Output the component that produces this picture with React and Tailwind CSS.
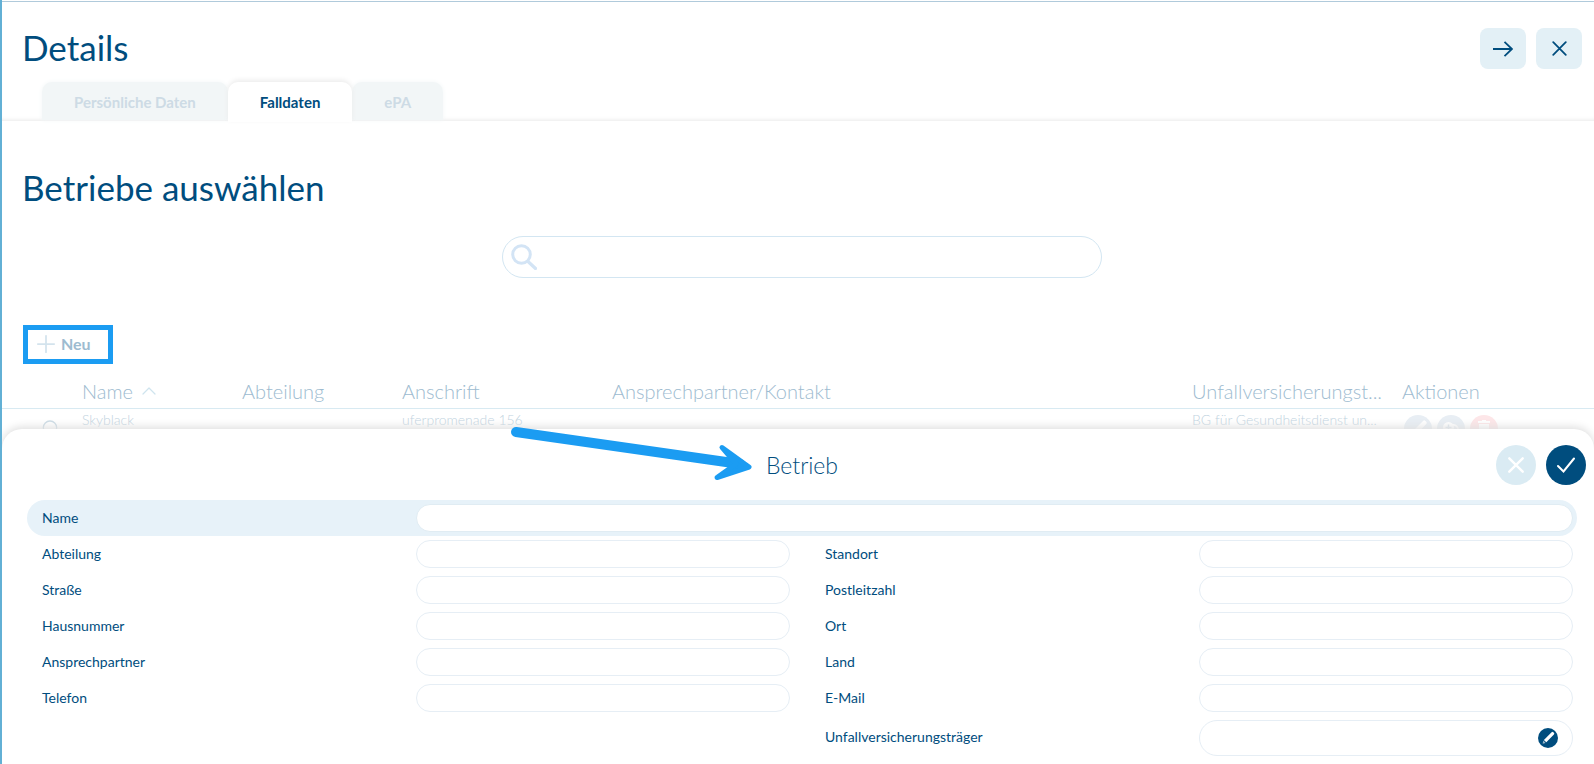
import React, { useState } from "react";
import { Plus, ChevronUp, UserRound } from "lucide-react";

const TABS = ["Persönliche Daten", "Falldaten", "ePA"];

const LEFT_FIELDS = [
  { id: "abteilung", label: "Abteilung" },
  { id: "strasse", label: "Straße" },
  { id: "hausnummer", label: "Hausnummer" },
  { id: "ansprechpartner", label: "Ansprechpartner" },
  { id: "telefon", label: "Telefon" },
];

const RIGHT_FIELDS = [
  { id: "standort", label: "Standort" },
  { id: "plz", label: "Postleitzahl" },
  { id: "ort", label: "Ort" },
  { id: "land", label: "Land" },
  { id: "email", label: "E-Mail" },
];

// ================= ICONS =================
function Pencil({ className }) {
  return (
    <svg viewBox="0 0 20 20" className={className} aria-hidden="true">
      <path
        d="M13.6 4.2a1.2 1.2 0 0 1 1.7 0l.6.6a1.2 1.2 0 0 1 0 1.7l-7.6 7.8-2.4-2.4z"
        fill="currentColor"
      />
      <path d="M5.3 12.6l2.3 2.3-3 .8z" fill="currentColor" opacity="0.6" />
    </svg>
  );
}

function Cross({ className, strokeWidth }) {
  return (
    <svg
      viewBox="0 0 16 16"
      className={className}
      fill="none"
      stroke="currentColor"
      strokeWidth={strokeWidth}
      aria-hidden="true"
    >
      <path d="M1.3 1.3l13.4 13.4M14.7 1.3L1.3 14.7" strokeLinecap="round" />
    </svg>
  );
}

// white disc with a plus cut out, second disc outlined behind it
function CopyPlus({ className }) {
  return (
    <svg viewBox="0 0 28 28" className={className} aria-hidden="true">
      <path
        d="M15 10h1.500a4.500 4.500 0 0 1 0 9H13a4 4 0 0 1-3-2"
        fill="none"
        stroke="currentColor"
        strokeWidth="1.8"
      />
      <circle cx="11.500" cy="12.500" r="5.500" fill="currentColor" />
      <path d="M11.500 9.500v6M8.500 12.500h6" stroke="#dbe5ed" strokeWidth="1.5" />
    </svg>
  );
}

function Bin({ className }) {
  return (
    <svg viewBox="0 0 28 28" className={className} fill="currentColor" aria-hidden="true">
      <path d="M12 5h4v1h4v2H8V6h4zM9 9h10v11.500a1.500 1.500 0 0 1-1.500 1.500h-7A1.500 1.500 0 0 1 9 20.500z" />
    </svg>
  );
}

// ================= FORM ROW =================
function Field({ id, label, value, onChange }) {
  return (
    <div className="grid h-7 grid-cols-2 items-center">
      <label htmlFor={id} className="pb-0.5">
        {label}
      </label>
      <input
        id={id}
        type="text"
        value={value}
        onChange={onChange}
        className="h-7 w-full rounded-full border border-[#e6eef5] bg-white px-3 outline-none"
      />
    </div>
  );
}

export default function App() {
  const [tab, setTab] = useState("Falldaten");
  const [search, setSearch] = useState("");
  const [form, setForm] = useState({});

  const bind = (id) => ({
    id,
    value: form[id] || "",
    onChange: (e) => setForm({ ...form, [id]: e.target.value }),
  });

  return (
    <div className="relative min-h-screen overflow-hidden border-l-2 border-[#62b0d5] bg-white pt-px font-['Lato',sans-serif] text-[#004d7e]">
      {/* HEADER */}
      <header className="flex h-[81px] items-start justify-between border-t border-[#b0cadb] pt-[26px] pr-3 pl-5">
        <h1 className="text-[35px] leading-[38px]">Details</h1>
        <div className="flex gap-[10px]">
          <button
            aria-label="Weiter"
            className="flex h-[41px] w-[46px] items-center justify-center rounded-lg bg-[#e3f0f6]"
          >
            <svg
              viewBox="0 0 20 16"
              className="h-4 w-5"
              fill="none"
              stroke="currentColor"
              strokeWidth="1.8"
            >
              <path d="M0 8h19M11.5 .8L19 8l-7.500 7.200" />
            </svg>
          </button>
          <button
            aria-label="Schließen"
            className="flex h-[41px] w-[46px] items-center justify-center rounded-lg bg-[#e3f0f6]"
          >
            <Cross className="h-[15px] w-[15px]" strokeWidth="1.9" />
          </button>
        </div>
      </header>

      {/* TABS */}
      <nav className="flex h-[39px] pl-10 text-[15px] font-bold shadow-[inset_0_-4px_4px_-3px_#e9e9e9]">
        {TABS.map((name) => (
          <button
            key={name}
            onClick={() => setTab(name)}
            className={
              name === tab
                ? "relative h-10 rounded-t-[10px] bg-white px-8 shadow-[0_-2px_5px_#ececec]"
                : "h-[38px] rounded-t-[10px] bg-[#f2f6f7] px-8 pt-0.5 text-[#cddbe5] shadow-[0_0_5px_#f2f6f7]"
            }
          >
            {name}
          </button>
        ))}
      </nav>

      {/* COMPANY LIST */}
      <main>
        <h2 className="mt-[47px] ml-5 text-[35px] leading-[38px]">Betriebe auswählen</h2>

        <div className="mt-[30px] flex justify-center pl-2">
          <label className="flex h-[42px] w-full max-w-[600px] items-center rounded-full border border-[#d3e6f2] pl-2">
            <svg
              viewBox="0 0 26 26"
              className="h-[26px] w-[26px] shrink-0 text-[#d3e4f5]"
              fill="none"
              stroke="currentColor"
            >
              <circle cx="10.500" cy="10.500" r="8.800" strokeWidth="3" />
              <path d="M17 17.500l7.500 7" strokeWidth="3.200" strokeLinecap="round" />
            </svg>
            <input
              type="search"
              aria-label="Betriebe suchen"
              value={search}
              onChange={(e) => setSearch(e.target.value)}
              className="h-full flex-1 bg-transparent px-3 outline-none"
            />
          </label>
        </div>

        <button className="mt-[47px] ml-[21px] flex h-[39px] w-[90px] items-center gap-px border-5 border-[#1b9cf2] pb-0.5 pl-1 text-base font-bold text-[#9dbbd0]">
          <Plus size={28} strokeWidth={1.5} className="text-[#d3e3ed]" />
          Neu
        </button>

        <table className="mt-[11px] w-full table-fixed text-left">
          <colgroup>
            <col className="w-20" />
            <col className="w-40" />
            <col className="w-40" />
            <col className="w-[210px]" />
            <col />
            <col className="w-[210px]" />
            <col className="w-48" />
          </colgroup>
          <thead>
            <tr className="h-[33px] border-b border-[#d8eaf2] text-xl text-[#9dbbd0]">
              <th aria-label="Typ" />
              <th className="font-light">
                <span className="flex items-center gap-1">
                  Name
                  <ChevronUp size={24} strokeWidth={1.25} className="text-[#cfe4ee]" />
                </span>
              </th>
              <th className="font-light">Abteilung</th>
              <th className="font-light">Anschrift</th>
              <th className="font-light">Ansprechpartner/Kontakt</th>
              <th className="truncate pr-3 font-light">Unfallversicherungst...</th>
              <th className="font-light">Aktionen</th>
            </tr>
          </thead>
          <tbody>
            <tr className="align-top text-sm text-[#bfd3e0]">
              <td className="pt-2 pl-8">
                <UserRound size={32} strokeWidth={1} className="text-[#cbdbe5]" />
              </td>
              <td className="pt-px font-light">Skyblack</td>
              <td />
              <td className="pt-px font-light">uferpromenade 156</td>
              <td />
              <td className="pt-px font-light">BG für Gesundheitsdienst un...</td>
              <td className="pt-1.5">
                <div className="flex gap-[5px] pl-0.5 text-white">
                  <button
                    aria-label="Bearbeiten"
                    className="flex h-7 w-7 items-center justify-center rounded-full bg-[#e8eef4]"
                  >
                    <Pencil className="h-7 w-7" />
                  </button>
                  <button
                    aria-label="Duplizieren"
                    className="flex h-7 w-7 items-center justify-center rounded-full bg-[#e8eef4]"
                  >
                    <CopyPlus className="h-7 w-7" />
                  </button>
                  <button
                    aria-label="Löschen"
                    className="flex h-7 w-7 items-center justify-center rounded-full bg-[#fde6e8]"
                  >
                    <Bin className="h-7 w-7" />
                  </button>
                </div>
              </td>
            </tr>
          </tbody>
        </table>
      </main>

      {/* BOTTOM SHEET */}
      <section
        role="dialog"
        aria-labelledby="sheet-title"
        className="absolute inset-x-0 bottom-0 rounded-t-[20px] bg-white pt-4 pb-2 text-[14px] shadow-[0_-2px_8px_#dedede]"
      >
        <div className="grid grid-cols-[1fr_auto_1fr] items-center pr-2 pl-4">
          <span />
          <h3 id="sheet-title" className="text-[23px] leading-10 font-light">
            Betrieb
          </h3>
          <div className="flex justify-end gap-[10px]">
            <button
              aria-label="Abbrechen"
              className="flex h-10 w-10 items-center justify-center rounded-full bg-[#daebf3] text-white"
            >
              <Cross className="h-4 w-4" strokeWidth="2.4" />
            </button>
            <button
              aria-label="Speichern"
              className="flex h-10 w-10 items-center justify-center rounded-full bg-[#004d7e] text-white"
            >
              <svg
                viewBox="0 0 18 16"
                className="h-4 w-[18px]"
                fill="none"
                stroke="currentColor"
                strokeWidth="2"
                strokeLinecap="round"
              >
                <path d="M1 9l5.500 5.500L17 1.500" />
              </svg>
            </button>
          </div>
        </div>

        <form onSubmit={(e) => e.preventDefault()}>
          <div className="mt-[15px] mr-[17px] ml-[25px] flex h-9 items-center rounded-full bg-[#e7f2f9] pr-1 pl-[15px]">
            <label htmlFor="name" className="w-[calc(25%-9px)] shrink-0 pb-0.5">
              Name
            </label>
            <input
              {...bind("name")}
              type="text"
              className="h-7 flex-1 rounded-full border border-[#e0ecf3] bg-white px-3 outline-none"
            />
          </div>

          <div className="mt-1 mr-[21px] ml-10 grid grid-cols-2 gap-[35px]">
            <div className="flex flex-col gap-2">
              {LEFT_FIELDS.map((f) => (
                <Field key={f.id} label={f.label} {...bind(f.id)} />
              ))}
            </div>
            <div className="flex flex-col gap-2">
              {RIGHT_FIELDS.map((f) => (
                <Field key={f.id} label={f.label} {...bind(f.id)} />
              ))}
              <div className="grid grid-cols-2 items-center">
                <label htmlFor="traeger" className="pb-1">
                  Unfallversicherungsträger
                </label>
                <div className="flex h-9 items-center rounded-full border border-[#e6eef5] pr-[14px]">
                  <input
                    {...bind("traeger")}
                    type="text"
                    className="min-w-0 flex-1 bg-transparent px-3 outline-none"
                  />
                  <button
                    type="button"
                    aria-label="Träger bearbeiten"
                    className="h-5 w-5 rounded-full bg-[#004d7e] text-white"
                  >
                    <Pencil className="h-5 w-5" />
                  </button>
                </div>
              </div>
            </div>
          </div>
        </form>
      </section>

      {/* ARROW from the new button to the sheet */}
      <svg
        viewBox="0 0 244 60"
        className="pointer-events-none absolute top-[424px] left-[508px] h-[60px] w-[244px] text-[#1b9cf2]"
        fill="none"
        stroke="currentColor"
        strokeLinejoin="round"
        strokeLinecap="round"
      >
        <path d="M6 8L230 40" strokeWidth="10" />
        <path d="M212 23.500L239 43L207 53.500L226 40z" strokeWidth="5" fill="currentColor" />
      </svg>
    </div>
  );
}
